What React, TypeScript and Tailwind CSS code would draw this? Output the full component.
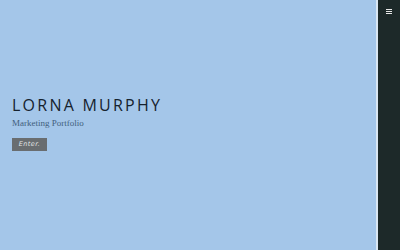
export default function App() {
  return (
    <div className="flex h-[250px] w-[400px] overflow-hidden bg-[#a4c6e9]">
      <main className="flex flex-1 flex-col pl-3 pt-[97px]">
        <h1 className="font-['Open_Sans',sans-serif] text-[16px] font-normal leading-none tracking-[0.14em] text-[#16222e]">
          LORNA MURPHY
        </h1>
        <p className="mt-[6px] font-['Liberation_Serif',serif] text-[9px] leading-none text-[#42607c]">
          Marketing Portfolio
        </p>
        <div>
          <button className="mt-[8px] h-[13px] w-[35px] bg-[#696d70] font-['DejaVu_Sans',sans-serif] text-[6.5px] italic leading-none tracking-[0.06em] text-[#e4e6e8]">
            Enter.
          </button>
        </div>
      </main>
      <aside className="flex w-[24px] justify-center border-l-[2px] border-[#d9e6f2] bg-[#1d2929] pt-[9px]">
        <svg width="6" height="5" viewBox="0 0 6 5">
          <rect x="0" y="0" width="6" height="1" fill="#e8e8e8" />
          <rect x="0" y="2" width="6" height="1" fill="#e8e8e8" />
          <rect x="0" y="4" width="6" height="1" fill="#e8e8e8" />
        </svg>
      </aside>
    </div>
  )
}
